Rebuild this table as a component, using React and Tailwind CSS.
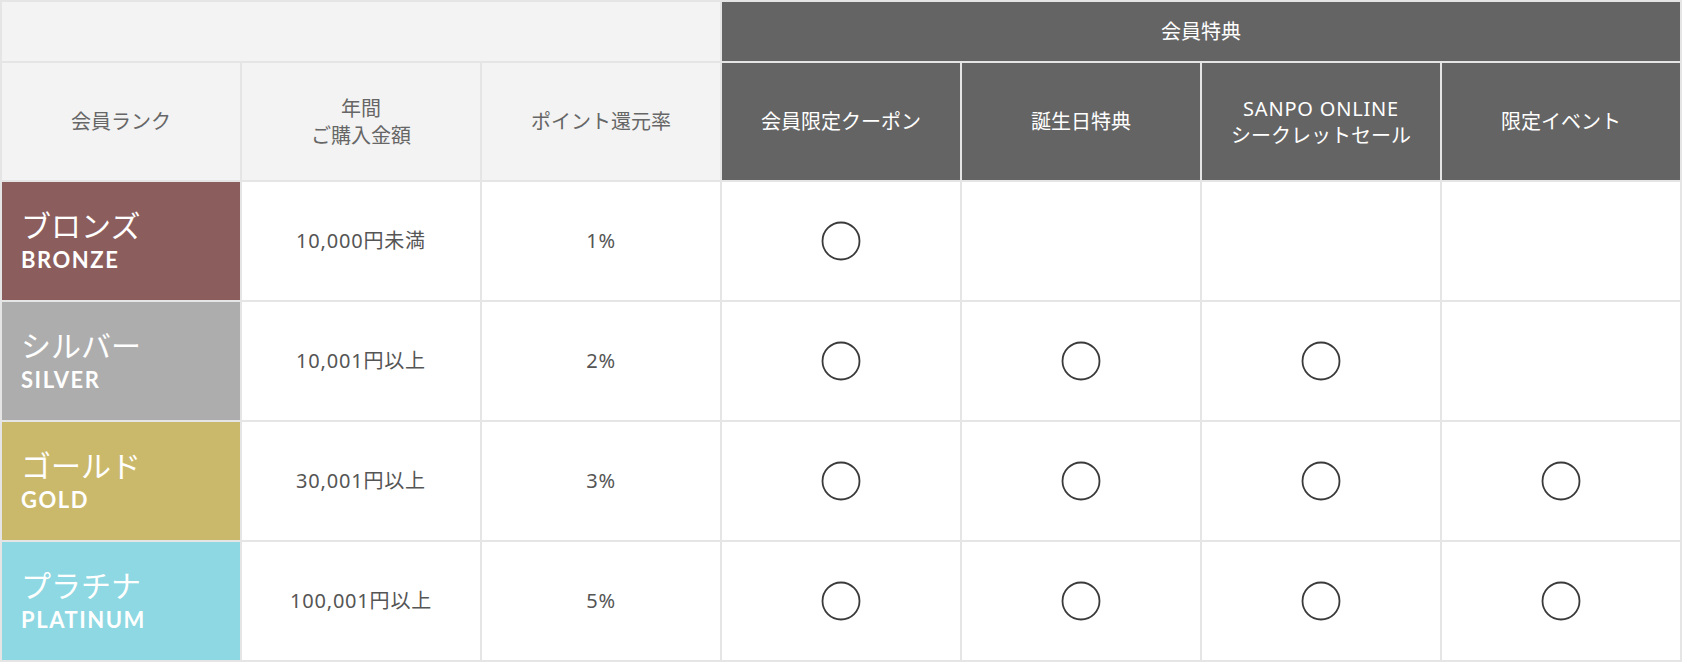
import React from 'react';

const ranks = [
  { ja: 'ブロンズ', en: 'BRONZE', bg: 'bg-[#8c5d5d]', amount: '10,000円未満', rate: '1%', perks: [true, false, false, false] },
  { ja: 'シルバー', en: 'SILVER', bg: 'bg-[#adadad]', amount: '10,001円以上', rate: '2%', perks: [true, true, true, false] },
  { ja: 'ゴールド', en: 'GOLD', bg: 'bg-[#cbb96b]', amount: '30,001円以上', rate: '3%', perks: [true, true, true, true] },
  { ja: 'プラチナ', en: 'PLATINUM', bg: 'bg-[#8dd8e2]', amount: '100,001円以上', rate: '5%', perks: [true, true, true, true] },
];

const Circle = () => (
  <svg width="40" height="40" viewBox="0 0 40 40">
    <circle cx="20" cy="20" r="18.5" fill="none" stroke="#3a3a3a" strokeWidth="1.8" />
  </svg>
);

const LightHead = ({ children }) => (
  <div className="flex items-center justify-center bg-[#f3f3f3] text-center text-[20px] leading-[27px] text-[#666]">
    <div>{children}</div>
  </div>
);

const DarkHead = ({ children, className = '' }) => (
  <div className={`flex items-center justify-center bg-[#646464] text-center text-[20px] leading-[27px] text-white ${className}`}>
    <div>{children}</div>
  </div>
);

export default function App() {
  return (
    <div
      className="grid w-[1682px] grid-cols-7 grid-rows-[59px_117px_repeat(4,118px)] gap-[2px] bg-[#e5e5e5] p-[2px]"
      style={{ fontFamily: '"Noto Sans", "Noto Sans CJK JP", sans-serif' }}
    >
      {/* header row 1 */}
      <div className="col-span-3 bg-[#f3f3f3]" />
      <DarkHead className="col-span-4">会員特典</DarkHead>

      {/* header row 2 */}
      <LightHead>
        会員ランク
      </LightHead>
      <LightHead>
        年間
        <br />
        ご購入金額
      </LightHead>
      <LightHead>ポイント還元率</LightHead>
      <DarkHead>会員限定クーポン</DarkHead>
      <DarkHead>誕生日特典</DarkHead>
      <DarkHead>
        <span className="tracking-[0.04em]">SANPO ONLINE</span>
        <br />
        シークレットセール
      </DarkHead>
      <DarkHead>限定イベント</DarkHead>

      {/* body */}
      {ranks.map((r) => (
        <React.Fragment key={r.en}>
          <div className={`flex flex-col justify-center pl-[19px] text-white ${r.bg}`}>
            <span className="text-[30px] leading-[38px]">{r.ja}</span>
            <span className="text-[22px] font-bold leading-[30px] tracking-[0.07em]" style={{ fontFamily: 'Lato, "Noto Sans", sans-serif' }}>
              {r.en}
            </span>
          </div>
          <div className="flex items-center justify-center bg-white text-[20px] tracking-[0.04em] text-[#555]">{r.amount}</div>
          <div className="flex items-center justify-center bg-white text-[20px] tracking-[0.04em] text-[#555]">{r.rate}</div>
          {r.perks.map((p, i) => (
            <div key={i} className="flex items-center justify-center bg-white">
              {p && <Circle />}
            </div>
          ))}
        </React.Fragment>
      ))}
    </div>
  );
}
